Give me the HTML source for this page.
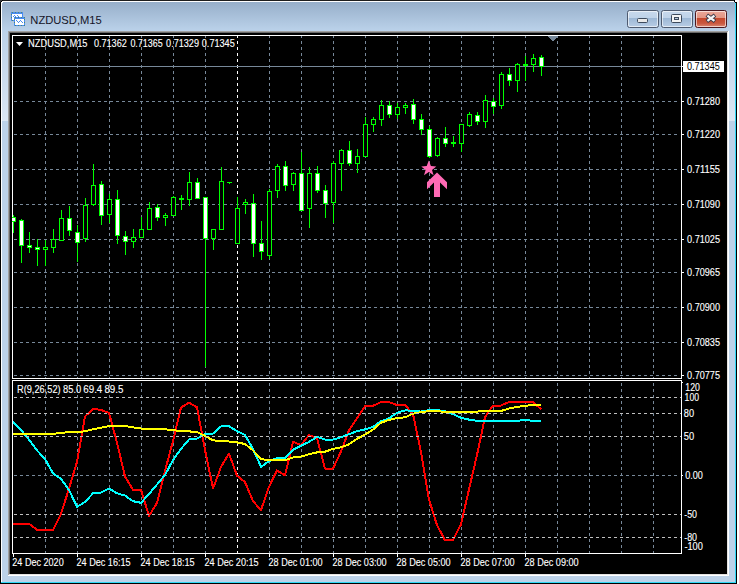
<!DOCTYPE html>
<html><head><meta charset="utf-8"><style>
html,body{margin:0;padding:0;background:#fff;width:739px;height:584px;overflow:hidden}
svg{display:block}
text{font-family:"Liberation Sans",sans-serif}
</style></head><body>
<svg width="739" height="584" viewBox="0 0 739 584">
<defs>
<linearGradient id="tg" x1="0" y1="0" x2="0" y2="1">
<stop offset="0" stop-color="#97afca"/><stop offset="1" stop-color="#bbd2ea"/>
</linearGradient>
<linearGradient id="bt" x1="0" y1="0" x2="0" y2="1">
<stop offset="0" stop-color="#c8d9ec"/><stop offset="0.43" stop-color="#bfd3e9"/><stop offset="0.44" stop-color="#9cb7d5"/><stop offset="1" stop-color="#b9cee6"/>
</linearGradient>
<linearGradient id="ct" x1="0" y1="0" x2="0" y2="1">
<stop offset="0" stop-color="#eba99b"/><stop offset="0.43" stop-color="#e39583"/><stop offset="0.44" stop-color="#c4472c"/><stop offset="0.75" stop-color="#c9573e"/><stop offset="1" stop-color="#de8f7d"/>
</linearGradient>
<linearGradient id="glare" x1="0" y1="0" x2="0" y2="1">
<stop offset="0" stop-color="#ffffff" stop-opacity="0"/><stop offset="1" stop-color="#ffffff" stop-opacity="0.45"/>
</linearGradient>
</defs>
<rect x="0" y="0" width="739" height="584" fill="#ffffff"/>
<g shape-rendering="crispEdges">
<rect x="0" y="0" width="737" height="584" fill="#000000"/>
<rect x="3" y="0" width="731" height="1" fill="#1e1e1e"/>
<rect x="1" y="1" width="735" height="582" fill="#ffffff"/>
<rect x="2" y="2" width="733" height="580" fill="#bcd2e9"/>
<rect x="735" y="2" width="1" height="581" fill="#30d8f6"/>
<rect x="1" y="582" width="735" height="1" fill="#30d8f6"/>
<rect x="2" y="2" width="733" height="29" fill="url(#tg)"/>
<rect x="2" y="31" width="6" height="90" fill="url(#glare)"/>
<rect x="729" y="31" width="6" height="90" fill="url(#glare)"/>
<rect x="8" y="31" width="721" height="545" fill="#ffffff"/>
<rect x="8" y="31" width="720" height="544" fill="#a0a0a0"/>
<rect x="9" y="32" width="719" height="543" fill="#e3e3e3"/>
<rect x="9" y="32" width="718" height="542" fill="#696969"/>
<rect x="10" y="33" width="717" height="541" fill="#000000"/>
</g>
<g shape-rendering="crispEdges"><rect x="0" y="0" width="2" height="1" fill="#3a3a3a"/><rect x="0" y="1" width="1" height="1" fill="#3a3a3a"/><rect x="1" y="1" width="1" height="1" fill="#000"/><rect x="2" y="2" width="1" height="1" fill="#ffffff"/>
<rect x="735" y="0" width="2" height="1" fill="#ffffff"/><rect x="736" y="1" width="1" height="1" fill="#ffffff"/><rect x="734" y="1" width="1" height="1" fill="#000"/><rect x="735" y="2" width="1" height="1" fill="#000"/></g>
<g shape-rendering="crispEdges">
<rect x="11" y="12" width="12" height="9" fill="#4a8df2"/>
<rect x="12" y="14" width="10" height="6" fill="#ffffff"/>
<rect x="14" y="17" width="11" height="9" fill="#4a8df2"/>
<rect x="15" y="19" width="9" height="6" fill="#ffffff"/>
<path d="M12 12.5h11M15 17.5h10M11.5 14v6M14.5 19v6M12 20.5h2M15 25.5h10M24.5 19v6" stroke="#4c8872" stroke-width="1" stroke-dasharray="1 2" fill="none"/>
<path d="M13 16h1M14 15h1M15 16h1M17 15h1M18 16h1M19 17h2" stroke="#4a8df2" stroke-width="1" fill="none" transform="translate(0,0.5)"/>
<path d="M16 20.5h1M17 21.5h1M18 22.5h1M19 21.5h1M20 20.5h1M21 21.5h1M22 22.5h1" stroke="#4a8df2" stroke-width="1" fill="none"/>
</g>
<text x="30.3" y="24" font-size="11.3" fill="#141428" textLength="71.5" lengthAdjust="spacingAndGlyphs">NZDUSD,M15</text>
<rect x="627.5" y="10.5" width="31" height="17" rx="2" fill="url(#bt)" stroke="#4e5b70"/>
<rect x="628.5" y="11.5" width="29" height="15" rx="1.5" fill="none" stroke="#ffffff" stroke-opacity="0.6"/>
<rect x="661.5" y="10.5" width="31" height="17" rx="2" fill="url(#bt)" stroke="#4e5b70"/>
<rect x="662.5" y="11.5" width="29" height="15" rx="1.5" fill="none" stroke="#ffffff" stroke-opacity="0.6"/>
<rect x="695.5" y="10.5" width="31" height="17" rx="2" fill="url(#ct)" stroke="#4a1820"/>
<rect x="696.5" y="11.5" width="29" height="15" rx="1.5" fill="none" stroke="#ffffff" stroke-opacity="0.6"/>
<rect x="637.5" y="18.5" width="10" height="4" rx="1" fill="#e9e9e9" stroke="#3d4a5c"/>
<rect x="671.5" y="14.5" width="10" height="8" rx="1" fill="#f4f4f4" stroke="#3d4a5c"/>
<rect x="674.5" y="17.5" width="4" height="2" fill="#b8c8da" stroke="#3d4a5c"/>
<path d="M706.8 15.2L715 21.4M715 15.2L706.8 21.4" stroke="#3a3a4a" stroke-width="4" stroke-linecap="butt"/>
<path d="M707.4 15.65L714.4 20.95M714.4 15.65L707.4 20.95" stroke="#f4f4f4" stroke-width="2.3" stroke-linecap="butt"/>
<g shape-rendering="crispEdges">
<path d="M45 36v2M45 41v3M45 47v3M45 53v3M45 59v3M45 65v3M45 71v3M45 77v3M45 83v3M45 89v3M45 95v3M45 101v3M45 107v3M45 113v3M45 119v3M45 125v3M45 131v3M45 137v3M45 143v3M45 149v3M45 155v3M45 161v3M45 167v3M45 173v3M45 179v3M45 185v3M45 191v3M45 197v3M45 203v3M45 209v3M45 215v3M45 221v3M45 227v3M45 233v3M45 239v3M45 245v3M45 251v3M45 257v3M45 263v3M45 269v3M45 275v3M45 281v3M45 287v3M45 293v3M45 299v3M45 305v3M45 311v3M45 317v3M45 323v3M45 329v3M45 335v3M45 341v3M45 347v3M45 353v3M45 359v3M45 365v3M45 371v3M45 377v1M45 383v3M45 389v3M45 395v3M45 401v3M45 407v3M45 413v3M45 419v3M45 425v3M45 431v3M45 437v3M45 443v3M45 449v3M45 455v3M45 461v3M45 467v3M45 473v3M45 479v3M45 485v3M45 491v3M45 497v3M45 503v3M45 509v3M45 515v3M45 521v3M45 527v3M45 533v3M45 539v3M45 545v3M45 551v2M77 36v2M77 41v3M77 47v3M77 53v3M77 59v3M77 65v3M77 71v3M77 77v3M77 83v3M77 89v3M77 95v3M77 101v3M77 107v3M77 113v3M77 119v3M77 125v3M77 131v3M77 137v3M77 143v3M77 149v3M77 155v3M77 161v3M77 167v3M77 173v3M77 179v3M77 185v3M77 191v3M77 197v3M77 203v3M77 209v3M77 215v3M77 221v3M77 227v3M77 233v3M77 239v3M77 245v3M77 251v3M77 257v3M77 263v3M77 269v3M77 275v3M77 281v3M77 287v3M77 293v3M77 299v3M77 305v3M77 311v3M77 317v3M77 323v3M77 329v3M77 335v3M77 341v3M77 347v3M77 353v3M77 359v3M77 365v3M77 371v3M77 377v1M77 383v3M77 389v3M77 395v3M77 401v3M77 407v3M77 413v3M77 419v3M77 425v3M77 431v3M77 437v3M77 443v3M77 449v3M77 455v3M77 461v3M77 467v3M77 473v3M77 479v3M77 485v3M77 491v3M77 497v3M77 503v3M77 509v3M77 515v3M77 521v3M77 527v3M77 533v3M77 539v3M77 545v3M77 551v2M109 36v2M109 41v3M109 47v3M109 53v3M109 59v3M109 65v3M109 71v3M109 77v3M109 83v3M109 89v3M109 95v3M109 101v3M109 107v3M109 113v3M109 119v3M109 125v3M109 131v3M109 137v3M109 143v3M109 149v3M109 155v3M109 161v3M109 167v3M109 173v3M109 179v3M109 185v3M109 191v3M109 197v3M109 203v3M109 209v3M109 215v3M109 221v3M109 227v3M109 233v3M109 239v3M109 245v3M109 251v3M109 257v3M109 263v3M109 269v3M109 275v3M109 281v3M109 287v3M109 293v3M109 299v3M109 305v3M109 311v3M109 317v3M109 323v3M109 329v3M109 335v3M109 341v3M109 347v3M109 353v3M109 359v3M109 365v3M109 371v3M109 377v1M109 383v3M109 389v3M109 395v3M109 401v3M109 407v3M109 413v3M109 419v3M109 425v3M109 431v3M109 437v3M109 443v3M109 449v3M109 455v3M109 461v3M109 467v3M109 473v3M109 479v3M109 485v3M109 491v3M109 497v3M109 503v3M109 509v3M109 515v3M109 521v3M109 527v3M109 533v3M109 539v3M109 545v3M109 551v2M141 36v2M141 41v3M141 47v3M141 53v3M141 59v3M141 65v3M141 71v3M141 77v3M141 83v3M141 89v3M141 95v3M141 101v3M141 107v3M141 113v3M141 119v3M141 125v3M141 131v3M141 137v3M141 143v3M141 149v3M141 155v3M141 161v3M141 167v3M141 173v3M141 179v3M141 185v3M141 191v3M141 197v3M141 203v3M141 209v3M141 215v3M141 221v3M141 227v3M141 233v3M141 239v3M141 245v3M141 251v3M141 257v3M141 263v3M141 269v3M141 275v3M141 281v3M141 287v3M141 293v3M141 299v3M141 305v3M141 311v3M141 317v3M141 323v3M141 329v3M141 335v3M141 341v3M141 347v3M141 353v3M141 359v3M141 365v3M141 371v3M141 377v1M141 383v3M141 389v3M141 395v3M141 401v3M141 407v3M141 413v3M141 419v3M141 425v3M141 431v3M141 437v3M141 443v3M141 449v3M141 455v3M141 461v3M141 467v3M141 473v3M141 479v3M141 485v3M141 491v3M141 497v3M141 503v3M141 509v3M141 515v3M141 521v3M141 527v3M141 533v3M141 539v3M141 545v3M141 551v2M173 36v2M173 41v3M173 47v3M173 53v3M173 59v3M173 65v3M173 71v3M173 77v3M173 83v3M173 89v3M173 95v3M173 101v3M173 107v3M173 113v3M173 119v3M173 125v3M173 131v3M173 137v3M173 143v3M173 149v3M173 155v3M173 161v3M173 167v3M173 173v3M173 179v3M173 185v3M173 191v3M173 197v3M173 203v3M173 209v3M173 215v3M173 221v3M173 227v3M173 233v3M173 239v3M173 245v3M173 251v3M173 257v3M173 263v3M173 269v3M173 275v3M173 281v3M173 287v3M173 293v3M173 299v3M173 305v3M173 311v3M173 317v3M173 323v3M173 329v3M173 335v3M173 341v3M173 347v3M173 353v3M173 359v3M173 365v3M173 371v3M173 377v1M173 383v3M173 389v3M173 395v3M173 401v3M173 407v3M173 413v3M173 419v3M173 425v3M173 431v3M173 437v3M173 443v3M173 449v3M173 455v3M173 461v3M173 467v3M173 473v3M173 479v3M173 485v3M173 491v3M173 497v3M173 503v3M173 509v3M173 515v3M173 521v3M173 527v3M173 533v3M173 539v3M173 545v3M173 551v2M205 36v2M205 41v3M205 47v3M205 53v3M205 59v3M205 65v3M205 71v3M205 77v3M205 83v3M205 89v3M205 95v3M205 101v3M205 107v3M205 113v3M205 119v3M205 125v3M205 131v3M205 137v3M205 143v3M205 149v3M205 155v3M205 161v3M205 167v3M205 173v3M205 179v3M205 185v3M205 191v3M205 197v3M205 203v3M205 209v3M205 215v3M205 221v3M205 227v3M205 233v3M205 239v3M205 245v3M205 251v3M205 257v3M205 263v3M205 269v3M205 275v3M205 281v3M205 287v3M205 293v3M205 299v3M205 305v3M205 311v3M205 317v3M205 323v3M205 329v3M205 335v3M205 341v3M205 347v3M205 353v3M205 359v3M205 365v3M205 371v3M205 377v1M205 383v3M205 389v3M205 395v3M205 401v3M205 407v3M205 413v3M205 419v3M205 425v3M205 431v3M205 437v3M205 443v3M205 449v3M205 455v3M205 461v3M205 467v3M205 473v3M205 479v3M205 485v3M205 491v3M205 497v3M205 503v3M205 509v3M205 515v3M205 521v3M205 527v3M205 533v3M205 539v3M205 545v3M205 551v2M269 36v2M269 41v3M269 47v3M269 53v3M269 59v3M269 65v3M269 71v3M269 77v3M269 83v3M269 89v3M269 95v3M269 101v3M269 107v3M269 113v3M269 119v3M269 125v3M269 131v3M269 137v3M269 143v3M269 149v3M269 155v3M269 161v3M269 167v3M269 173v3M269 179v3M269 185v3M269 191v3M269 197v3M269 203v3M269 209v3M269 215v3M269 221v3M269 227v3M269 233v3M269 239v3M269 245v3M269 251v3M269 257v3M269 263v3M269 269v3M269 275v3M269 281v3M269 287v3M269 293v3M269 299v3M269 305v3M269 311v3M269 317v3M269 323v3M269 329v3M269 335v3M269 341v3M269 347v3M269 353v3M269 359v3M269 365v3M269 371v3M269 377v1M269 383v3M269 389v3M269 395v3M269 401v3M269 407v3M269 413v3M269 419v3M269 425v3M269 431v3M269 437v3M269 443v3M269 449v3M269 455v3M269 461v3M269 467v3M269 473v3M269 479v3M269 485v3M269 491v3M269 497v3M269 503v3M269 509v3M269 515v3M269 521v3M269 527v3M269 533v3M269 539v3M269 545v3M269 551v2M301 36v2M301 41v3M301 47v3M301 53v3M301 59v3M301 65v3M301 71v3M301 77v3M301 83v3M301 89v3M301 95v3M301 101v3M301 107v3M301 113v3M301 119v3M301 125v3M301 131v3M301 137v3M301 143v3M301 149v3M301 155v3M301 161v3M301 167v3M301 173v3M301 179v3M301 185v3M301 191v3M301 197v3M301 203v3M301 209v3M301 215v3M301 221v3M301 227v3M301 233v3M301 239v3M301 245v3M301 251v3M301 257v3M301 263v3M301 269v3M301 275v3M301 281v3M301 287v3M301 293v3M301 299v3M301 305v3M301 311v3M301 317v3M301 323v3M301 329v3M301 335v3M301 341v3M301 347v3M301 353v3M301 359v3M301 365v3M301 371v3M301 377v1M301 383v3M301 389v3M301 395v3M301 401v3M301 407v3M301 413v3M301 419v3M301 425v3M301 431v3M301 437v3M301 443v3M301 449v3M301 455v3M301 461v3M301 467v3M301 473v3M301 479v3M301 485v3M301 491v3M301 497v3M301 503v3M301 509v3M301 515v3M301 521v3M301 527v3M301 533v3M301 539v3M301 545v3M301 551v2M333 36v2M333 41v3M333 47v3M333 53v3M333 59v3M333 65v3M333 71v3M333 77v3M333 83v3M333 89v3M333 95v3M333 101v3M333 107v3M333 113v3M333 119v3M333 125v3M333 131v3M333 137v3M333 143v3M333 149v3M333 155v3M333 161v3M333 167v3M333 173v3M333 179v3M333 185v3M333 191v3M333 197v3M333 203v3M333 209v3M333 215v3M333 221v3M333 227v3M333 233v3M333 239v3M333 245v3M333 251v3M333 257v3M333 263v3M333 269v3M333 275v3M333 281v3M333 287v3M333 293v3M333 299v3M333 305v3M333 311v3M333 317v3M333 323v3M333 329v3M333 335v3M333 341v3M333 347v3M333 353v3M333 359v3M333 365v3M333 371v3M333 377v1M333 383v3M333 389v3M333 395v3M333 401v3M333 407v3M333 413v3M333 419v3M333 425v3M333 431v3M333 437v3M333 443v3M333 449v3M333 455v3M333 461v3M333 467v3M333 473v3M333 479v3M333 485v3M333 491v3M333 497v3M333 503v3M333 509v3M333 515v3M333 521v3M333 527v3M333 533v3M333 539v3M333 545v3M333 551v2M365 36v2M365 41v3M365 47v3M365 53v3M365 59v3M365 65v3M365 71v3M365 77v3M365 83v3M365 89v3M365 95v3M365 101v3M365 107v3M365 113v3M365 119v3M365 125v3M365 131v3M365 137v3M365 143v3M365 149v3M365 155v3M365 161v3M365 167v3M365 173v3M365 179v3M365 185v3M365 191v3M365 197v3M365 203v3M365 209v3M365 215v3M365 221v3M365 227v3M365 233v3M365 239v3M365 245v3M365 251v3M365 257v3M365 263v3M365 269v3M365 275v3M365 281v3M365 287v3M365 293v3M365 299v3M365 305v3M365 311v3M365 317v3M365 323v3M365 329v3M365 335v3M365 341v3M365 347v3M365 353v3M365 359v3M365 365v3M365 371v3M365 377v1M365 383v3M365 389v3M365 395v3M365 401v3M365 407v3M365 413v3M365 419v3M365 425v3M365 431v3M365 437v3M365 443v3M365 449v3M365 455v3M365 461v3M365 467v3M365 473v3M365 479v3M365 485v3M365 491v3M365 497v3M365 503v3M365 509v3M365 515v3M365 521v3M365 527v3M365 533v3M365 539v3M365 545v3M365 551v2M397 36v2M397 41v3M397 47v3M397 53v3M397 59v3M397 65v3M397 71v3M397 77v3M397 83v3M397 89v3M397 95v3M397 101v3M397 107v3M397 113v3M397 119v3M397 125v3M397 131v3M397 137v3M397 143v3M397 149v3M397 155v3M397 161v3M397 167v3M397 173v3M397 179v3M397 185v3M397 191v3M397 197v3M397 203v3M397 209v3M397 215v3M397 221v3M397 227v3M397 233v3M397 239v3M397 245v3M397 251v3M397 257v3M397 263v3M397 269v3M397 275v3M397 281v3M397 287v3M397 293v3M397 299v3M397 305v3M397 311v3M397 317v3M397 323v3M397 329v3M397 335v3M397 341v3M397 347v3M397 353v3M397 359v3M397 365v3M397 371v3M397 377v1M397 383v3M397 389v3M397 395v3M397 401v3M397 407v3M397 413v3M397 419v3M397 425v3M397 431v3M397 437v3M397 443v3M397 449v3M397 455v3M397 461v3M397 467v3M397 473v3M397 479v3M397 485v3M397 491v3M397 497v3M397 503v3M397 509v3M397 515v3M397 521v3M397 527v3M397 533v3M397 539v3M397 545v3M397 551v2M429 36v2M429 41v3M429 47v3M429 53v3M429 59v3M429 65v3M429 71v3M429 77v3M429 83v3M429 89v3M429 95v3M429 101v3M429 107v3M429 113v3M429 119v3M429 125v3M429 131v3M429 137v3M429 143v3M429 149v3M429 155v3M429 161v3M429 167v3M429 173v3M429 179v3M429 185v3M429 191v3M429 197v3M429 203v3M429 209v3M429 215v3M429 221v3M429 227v3M429 233v3M429 239v3M429 245v3M429 251v3M429 257v3M429 263v3M429 269v3M429 275v3M429 281v3M429 287v3M429 293v3M429 299v3M429 305v3M429 311v3M429 317v3M429 323v3M429 329v3M429 335v3M429 341v3M429 347v3M429 353v3M429 359v3M429 365v3M429 371v3M429 377v1M429 383v3M429 389v3M429 395v3M429 401v3M429 407v3M429 413v3M429 419v3M429 425v3M429 431v3M429 437v3M429 443v3M429 449v3M429 455v3M429 461v3M429 467v3M429 473v3M429 479v3M429 485v3M429 491v3M429 497v3M429 503v3M429 509v3M429 515v3M429 521v3M429 527v3M429 533v3M429 539v3M429 545v3M429 551v2M461 36v2M461 41v3M461 47v3M461 53v3M461 59v3M461 65v3M461 71v3M461 77v3M461 83v3M461 89v3M461 95v3M461 101v3M461 107v3M461 113v3M461 119v3M461 125v3M461 131v3M461 137v3M461 143v3M461 149v3M461 155v3M461 161v3M461 167v3M461 173v3M461 179v3M461 185v3M461 191v3M461 197v3M461 203v3M461 209v3M461 215v3M461 221v3M461 227v3M461 233v3M461 239v3M461 245v3M461 251v3M461 257v3M461 263v3M461 269v3M461 275v3M461 281v3M461 287v3M461 293v3M461 299v3M461 305v3M461 311v3M461 317v3M461 323v3M461 329v3M461 335v3M461 341v3M461 347v3M461 353v3M461 359v3M461 365v3M461 371v3M461 377v1M461 383v3M461 389v3M461 395v3M461 401v3M461 407v3M461 413v3M461 419v3M461 425v3M461 431v3M461 437v3M461 443v3M461 449v3M461 455v3M461 461v3M461 467v3M461 473v3M461 479v3M461 485v3M461 491v3M461 497v3M461 503v3M461 509v3M461 515v3M461 521v3M461 527v3M461 533v3M461 539v3M461 545v3M461 551v2M493 36v2M493 41v3M493 47v3M493 53v3M493 59v3M493 65v3M493 71v3M493 77v3M493 83v3M493 89v3M493 95v3M493 101v3M493 107v3M493 113v3M493 119v3M493 125v3M493 131v3M493 137v3M493 143v3M493 149v3M493 155v3M493 161v3M493 167v3M493 173v3M493 179v3M493 185v3M493 191v3M493 197v3M493 203v3M493 209v3M493 215v3M493 221v3M493 227v3M493 233v3M493 239v3M493 245v3M493 251v3M493 257v3M493 263v3M493 269v3M493 275v3M493 281v3M493 287v3M493 293v3M493 299v3M493 305v3M493 311v3M493 317v3M493 323v3M493 329v3M493 335v3M493 341v3M493 347v3M493 353v3M493 359v3M493 365v3M493 371v3M493 377v1M493 383v3M493 389v3M493 395v3M493 401v3M493 407v3M493 413v3M493 419v3M493 425v3M493 431v3M493 437v3M493 443v3M493 449v3M493 455v3M493 461v3M493 467v3M493 473v3M493 479v3M493 485v3M493 491v3M493 497v3M493 503v3M493 509v3M493 515v3M493 521v3M493 527v3M493 533v3M493 539v3M493 545v3M493 551v2M525 36v2M525 41v3M525 47v3M525 53v3M525 59v3M525 65v3M525 71v3M525 77v3M525 83v3M525 89v3M525 95v3M525 101v3M525 107v3M525 113v3M525 119v3M525 125v3M525 131v3M525 137v3M525 143v3M525 149v3M525 155v3M525 161v3M525 167v3M525 173v3M525 179v3M525 185v3M525 191v3M525 197v3M525 203v3M525 209v3M525 215v3M525 221v3M525 227v3M525 233v3M525 239v3M525 245v3M525 251v3M525 257v3M525 263v3M525 269v3M525 275v3M525 281v3M525 287v3M525 293v3M525 299v3M525 305v3M525 311v3M525 317v3M525 323v3M525 329v3M525 335v3M525 341v3M525 347v3M525 353v3M525 359v3M525 365v3M525 371v3M525 377v1M525 383v3M525 389v3M525 395v3M525 401v3M525 407v3M525 413v3M525 419v3M525 425v3M525 431v3M525 437v3M525 443v3M525 449v3M525 455v3M525 461v3M525 467v3M525 473v3M525 479v3M525 485v3M525 491v3M525 497v3M525 503v3M525 509v3M525 515v3M525 521v3M525 527v3M525 533v3M525 539v3M525 545v3M525 551v2M557 36v2M557 41v3M557 47v3M557 53v3M557 59v3M557 65v3M557 71v3M557 77v3M557 83v3M557 89v3M557 95v3M557 101v3M557 107v3M557 113v3M557 119v3M557 125v3M557 131v3M557 137v3M557 143v3M557 149v3M557 155v3M557 161v3M557 167v3M557 173v3M557 179v3M557 185v3M557 191v3M557 197v3M557 203v3M557 209v3M557 215v3M557 221v3M557 227v3M557 233v3M557 239v3M557 245v3M557 251v3M557 257v3M557 263v3M557 269v3M557 275v3M557 281v3M557 287v3M557 293v3M557 299v3M557 305v3M557 311v3M557 317v3M557 323v3M557 329v3M557 335v3M557 341v3M557 347v3M557 353v3M557 359v3M557 365v3M557 371v3M557 377v1M557 383v3M557 389v3M557 395v3M557 401v3M557 407v3M557 413v3M557 419v3M557 425v3M557 431v3M557 437v3M557 443v3M557 449v3M557 455v3M557 461v3M557 467v3M557 473v3M557 479v3M557 485v3M557 491v3M557 497v3M557 503v3M557 509v3M557 515v3M557 521v3M557 527v3M557 533v3M557 539v3M557 545v3M557 551v2M589 36v2M589 41v3M589 47v3M589 53v3M589 59v3M589 65v3M589 71v3M589 77v3M589 83v3M589 89v3M589 95v3M589 101v3M589 107v3M589 113v3M589 119v3M589 125v3M589 131v3M589 137v3M589 143v3M589 149v3M589 155v3M589 161v3M589 167v3M589 173v3M589 179v3M589 185v3M589 191v3M589 197v3M589 203v3M589 209v3M589 215v3M589 221v3M589 227v3M589 233v3M589 239v3M589 245v3M589 251v3M589 257v3M589 263v3M589 269v3M589 275v3M589 281v3M589 287v3M589 293v3M589 299v3M589 305v3M589 311v3M589 317v3M589 323v3M589 329v3M589 335v3M589 341v3M589 347v3M589 353v3M589 359v3M589 365v3M589 371v3M589 377v1M589 383v3M589 389v3M589 395v3M589 401v3M589 407v3M589 413v3M589 419v3M589 425v3M589 431v3M589 437v3M589 443v3M589 449v3M589 455v3M589 461v3M589 467v3M589 473v3M589 479v3M589 485v3M589 491v3M589 497v3M589 503v3M589 509v3M589 515v3M589 521v3M589 527v3M589 533v3M589 539v3M589 545v3M589 551v2M621 36v2M621 41v3M621 47v3M621 53v3M621 59v3M621 65v3M621 71v3M621 77v3M621 83v3M621 89v3M621 95v3M621 101v3M621 107v3M621 113v3M621 119v3M621 125v3M621 131v3M621 137v3M621 143v3M621 149v3M621 155v3M621 161v3M621 167v3M621 173v3M621 179v3M621 185v3M621 191v3M621 197v3M621 203v3M621 209v3M621 215v3M621 221v3M621 227v3M621 233v3M621 239v3M621 245v3M621 251v3M621 257v3M621 263v3M621 269v3M621 275v3M621 281v3M621 287v3M621 293v3M621 299v3M621 305v3M621 311v3M621 317v3M621 323v3M621 329v3M621 335v3M621 341v3M621 347v3M621 353v3M621 359v3M621 365v3M621 371v3M621 377v1M621 383v3M621 389v3M621 395v3M621 401v3M621 407v3M621 413v3M621 419v3M621 425v3M621 431v3M621 437v3M621 443v3M621 449v3M621 455v3M621 461v3M621 467v3M621 473v3M621 479v3M621 485v3M621 491v3M621 497v3M621 503v3M621 509v3M621 515v3M621 521v3M621 527v3M621 533v3M621 539v3M621 545v3M621 551v2M653 36v2M653 41v3M653 47v3M653 53v3M653 59v3M653 65v3M653 71v3M653 77v3M653 83v3M653 89v3M653 95v3M653 101v3M653 107v3M653 113v3M653 119v3M653 125v3M653 131v3M653 137v3M653 143v3M653 149v3M653 155v3M653 161v3M653 167v3M653 173v3M653 179v3M653 185v3M653 191v3M653 197v3M653 203v3M653 209v3M653 215v3M653 221v3M653 227v3M653 233v3M653 239v3M653 245v3M653 251v3M653 257v3M653 263v3M653 269v3M653 275v3M653 281v3M653 287v3M653 293v3M653 299v3M653 305v3M653 311v3M653 317v3M653 323v3M653 329v3M653 335v3M653 341v3M653 347v3M653 353v3M653 359v3M653 365v3M653 371v3M653 377v1M653 383v3M653 389v3M653 395v3M653 401v3M653 407v3M653 413v3M653 419v3M653 425v3M653 431v3M653 437v3M653 443v3M653 449v3M653 455v3M653 461v3M653 467v3M653 473v3M653 479v3M653 485v3M653 491v3M653 497v3M653 503v3M653 509v3M653 515v3M653 521v3M653 527v3M653 533v3M653 539v3M653 545v3M653 551v2" stroke="#778899" stroke-width="1" fill="none" transform="translate(0.5,0)"/>
<path d="M237 36v2M237 41v3M237 47v3M237 53v3M237 59v3M237 65v3M237 71v3M237 77v3M237 83v3M237 89v3M237 95v3M237 101v3M237 107v3M237 113v3M237 119v3M237 125v3M237 131v3M237 137v3M237 143v3M237 149v3M237 155v3M237 161v3M237 167v3M237 173v3M237 179v3M237 185v3M237 191v3M237 197v3M237 203v3M237 209v3M237 215v3M237 221v3M237 227v3M237 233v3M237 239v3M237 245v3M237 251v3M237 257v3M237 263v3M237 269v3M237 275v3M237 281v3M237 287v3M237 293v3M237 299v3M237 305v3M237 311v3M237 317v3M237 323v3M237 329v3M237 335v3M237 341v3M237 347v3M237 353v3M237 359v3M237 365v3M237 371v3M237 377v1M237 383v3M237 389v3M237 395v3M237 401v3M237 407v3M237 413v3M237 419v3M237 425v3M237 431v3M237 437v3M237 443v3M237 449v3M237 455v3M237 461v3M237 467v3M237 473v3M237 479v3M237 485v3M237 491v3M237 497v3M237 503v3M237 509v3M237 515v3M237 521v3M237 527v3M237 533v3M237 539v3M237 545v3M237 551v2" stroke="#ffffff" stroke-width="1" fill="none" transform="translate(0.5,0)"/>
<path d="M15 101h2M14 101h3M20 101h3M26 101h3M32 101h3M38 101h3M44 101h3M50 101h3M56 101h3M62 101h3M68 101h3M74 101h3M80 101h3M86 101h3M92 101h3M98 101h3M104 101h3M110 101h3M116 101h3M122 101h3M128 101h3M134 101h3M140 101h3M146 101h3M152 101h3M158 101h3M164 101h3M170 101h3M176 101h3M182 101h3M188 101h3M194 101h3M200 101h3M206 101h3M212 101h3M218 101h3M224 101h3M230 101h3M236 101h3M242 101h3M248 101h3M254 101h3M260 101h3M266 101h3M272 101h3M278 101h3M284 101h3M290 101h3M296 101h3M302 101h3M308 101h3M314 101h3M320 101h3M326 101h3M332 101h3M338 101h3M344 101h3M350 101h3M356 101h3M362 101h3M368 101h3M374 101h3M380 101h3M386 101h3M392 101h3M398 101h3M404 101h3M410 101h3M416 101h3M422 101h3M428 101h3M434 101h3M440 101h3M446 101h3M452 101h3M458 101h3M464 101h3M470 101h3M476 101h3M482 101h3M488 101h3M494 101h3M500 101h3M506 101h3M512 101h3M518 101h3M524 101h3M530 101h3M536 101h3M542 101h3M548 101h3M554 101h3M560 101h3M566 101h3M572 101h3M578 101h3M584 101h3M590 101h3M596 101h3M602 101h3M608 101h3M614 101h3M620 101h3M626 101h3M632 101h3M638 101h3M644 101h3M650 101h3M656 101h3M662 101h3M668 101h3M674 101h3M15 134h2M14 134h3M20 134h3M26 134h3M32 134h3M38 134h3M44 134h3M50 134h3M56 134h3M62 134h3M68 134h3M74 134h3M80 134h3M86 134h3M92 134h3M98 134h3M104 134h3M110 134h3M116 134h3M122 134h3M128 134h3M134 134h3M140 134h3M146 134h3M152 134h3M158 134h3M164 134h3M170 134h3M176 134h3M182 134h3M188 134h3M194 134h3M200 134h3M206 134h3M212 134h3M218 134h3M224 134h3M230 134h3M236 134h3M242 134h3M248 134h3M254 134h3M260 134h3M266 134h3M272 134h3M278 134h3M284 134h3M290 134h3M296 134h3M302 134h3M308 134h3M314 134h3M320 134h3M326 134h3M332 134h3M338 134h3M344 134h3M350 134h3M356 134h3M362 134h3M368 134h3M374 134h3M380 134h3M386 134h3M392 134h3M398 134h3M404 134h3M410 134h3M416 134h3M422 134h3M428 134h3M434 134h3M440 134h3M446 134h3M452 134h3M458 134h3M464 134h3M470 134h3M476 134h3M482 134h3M488 134h3M494 134h3M500 134h3M506 134h3M512 134h3M518 134h3M524 134h3M530 134h3M536 134h3M542 134h3M548 134h3M554 134h3M560 134h3M566 134h3M572 134h3M578 134h3M584 134h3M590 134h3M596 134h3M602 134h3M608 134h3M614 134h3M620 134h3M626 134h3M632 134h3M638 134h3M644 134h3M650 134h3M656 134h3M662 134h3M668 134h3M674 134h3M15 169h2M14 169h3M20 169h3M26 169h3M32 169h3M38 169h3M44 169h3M50 169h3M56 169h3M62 169h3M68 169h3M74 169h3M80 169h3M86 169h3M92 169h3M98 169h3M104 169h3M110 169h3M116 169h3M122 169h3M128 169h3M134 169h3M140 169h3M146 169h3M152 169h3M158 169h3M164 169h3M170 169h3M176 169h3M182 169h3M188 169h3M194 169h3M200 169h3M206 169h3M212 169h3M218 169h3M224 169h3M230 169h3M236 169h3M242 169h3M248 169h3M254 169h3M260 169h3M266 169h3M272 169h3M278 169h3M284 169h3M290 169h3M296 169h3M302 169h3M308 169h3M314 169h3M320 169h3M326 169h3M332 169h3M338 169h3M344 169h3M350 169h3M356 169h3M362 169h3M368 169h3M374 169h3M380 169h3M386 169h3M392 169h3M398 169h3M404 169h3M410 169h3M416 169h3M422 169h3M428 169h3M434 169h3M440 169h3M446 169h3M452 169h3M458 169h3M464 169h3M470 169h3M476 169h3M482 169h3M488 169h3M494 169h3M500 169h3M506 169h3M512 169h3M518 169h3M524 169h3M530 169h3M536 169h3M542 169h3M548 169h3M554 169h3M560 169h3M566 169h3M572 169h3M578 169h3M584 169h3M590 169h3M596 169h3M602 169h3M608 169h3M614 169h3M620 169h3M626 169h3M632 169h3M638 169h3M644 169h3M650 169h3M656 169h3M662 169h3M668 169h3M674 169h3M15 204h2M14 204h3M20 204h3M26 204h3M32 204h3M38 204h3M44 204h3M50 204h3M56 204h3M62 204h3M68 204h3M74 204h3M80 204h3M86 204h3M92 204h3M98 204h3M104 204h3M110 204h3M116 204h3M122 204h3M128 204h3M134 204h3M140 204h3M146 204h3M152 204h3M158 204h3M164 204h3M170 204h3M176 204h3M182 204h3M188 204h3M194 204h3M200 204h3M206 204h3M212 204h3M218 204h3M224 204h3M230 204h3M236 204h3M242 204h3M248 204h3M254 204h3M260 204h3M266 204h3M272 204h3M278 204h3M284 204h3M290 204h3M296 204h3M302 204h3M308 204h3M314 204h3M320 204h3M326 204h3M332 204h3M338 204h3M344 204h3M350 204h3M356 204h3M362 204h3M368 204h3M374 204h3M380 204h3M386 204h3M392 204h3M398 204h3M404 204h3M410 204h3M416 204h3M422 204h3M428 204h3M434 204h3M440 204h3M446 204h3M452 204h3M458 204h3M464 204h3M470 204h3M476 204h3M482 204h3M488 204h3M494 204h3M500 204h3M506 204h3M512 204h3M518 204h3M524 204h3M530 204h3M536 204h3M542 204h3M548 204h3M554 204h3M560 204h3M566 204h3M572 204h3M578 204h3M584 204h3M590 204h3M596 204h3M602 204h3M608 204h3M614 204h3M620 204h3M626 204h3M632 204h3M638 204h3M644 204h3M650 204h3M656 204h3M662 204h3M668 204h3M674 204h3M15 239h2M14 239h3M20 239h3M26 239h3M32 239h3M38 239h3M44 239h3M50 239h3M56 239h3M62 239h3M68 239h3M74 239h3M80 239h3M86 239h3M92 239h3M98 239h3M104 239h3M110 239h3M116 239h3M122 239h3M128 239h3M134 239h3M140 239h3M146 239h3M152 239h3M158 239h3M164 239h3M170 239h3M176 239h3M182 239h3M188 239h3M194 239h3M200 239h3M206 239h3M212 239h3M218 239h3M224 239h3M230 239h3M236 239h3M242 239h3M248 239h3M254 239h3M260 239h3M266 239h3M272 239h3M278 239h3M284 239h3M290 239h3M296 239h3M302 239h3M308 239h3M314 239h3M320 239h3M326 239h3M332 239h3M338 239h3M344 239h3M350 239h3M356 239h3M362 239h3M368 239h3M374 239h3M380 239h3M386 239h3M392 239h3M398 239h3M404 239h3M410 239h3M416 239h3M422 239h3M428 239h3M434 239h3M440 239h3M446 239h3M452 239h3M458 239h3M464 239h3M470 239h3M476 239h3M482 239h3M488 239h3M494 239h3M500 239h3M506 239h3M512 239h3M518 239h3M524 239h3M530 239h3M536 239h3M542 239h3M548 239h3M554 239h3M560 239h3M566 239h3M572 239h3M578 239h3M584 239h3M590 239h3M596 239h3M602 239h3M608 239h3M614 239h3M620 239h3M626 239h3M632 239h3M638 239h3M644 239h3M650 239h3M656 239h3M662 239h3M668 239h3M674 239h3M15 272h2M14 272h3M20 272h3M26 272h3M32 272h3M38 272h3M44 272h3M50 272h3M56 272h3M62 272h3M68 272h3M74 272h3M80 272h3M86 272h3M92 272h3M98 272h3M104 272h3M110 272h3M116 272h3M122 272h3M128 272h3M134 272h3M140 272h3M146 272h3M152 272h3M158 272h3M164 272h3M170 272h3M176 272h3M182 272h3M188 272h3M194 272h3M200 272h3M206 272h3M212 272h3M218 272h3M224 272h3M230 272h3M236 272h3M242 272h3M248 272h3M254 272h3M260 272h3M266 272h3M272 272h3M278 272h3M284 272h3M290 272h3M296 272h3M302 272h3M308 272h3M314 272h3M320 272h3M326 272h3M332 272h3M338 272h3M344 272h3M350 272h3M356 272h3M362 272h3M368 272h3M374 272h3M380 272h3M386 272h3M392 272h3M398 272h3M404 272h3M410 272h3M416 272h3M422 272h3M428 272h3M434 272h3M440 272h3M446 272h3M452 272h3M458 272h3M464 272h3M470 272h3M476 272h3M482 272h3M488 272h3M494 272h3M500 272h3M506 272h3M512 272h3M518 272h3M524 272h3M530 272h3M536 272h3M542 272h3M548 272h3M554 272h3M560 272h3M566 272h3M572 272h3M578 272h3M584 272h3M590 272h3M596 272h3M602 272h3M608 272h3M614 272h3M620 272h3M626 272h3M632 272h3M638 272h3M644 272h3M650 272h3M656 272h3M662 272h3M668 272h3M674 272h3M15 307h2M14 307h3M20 307h3M26 307h3M32 307h3M38 307h3M44 307h3M50 307h3M56 307h3M62 307h3M68 307h3M74 307h3M80 307h3M86 307h3M92 307h3M98 307h3M104 307h3M110 307h3M116 307h3M122 307h3M128 307h3M134 307h3M140 307h3M146 307h3M152 307h3M158 307h3M164 307h3M170 307h3M176 307h3M182 307h3M188 307h3M194 307h3M200 307h3M206 307h3M212 307h3M218 307h3M224 307h3M230 307h3M236 307h3M242 307h3M248 307h3M254 307h3M260 307h3M266 307h3M272 307h3M278 307h3M284 307h3M290 307h3M296 307h3M302 307h3M308 307h3M314 307h3M320 307h3M326 307h3M332 307h3M338 307h3M344 307h3M350 307h3M356 307h3M362 307h3M368 307h3M374 307h3M380 307h3M386 307h3M392 307h3M398 307h3M404 307h3M410 307h3M416 307h3M422 307h3M428 307h3M434 307h3M440 307h3M446 307h3M452 307h3M458 307h3M464 307h3M470 307h3M476 307h3M482 307h3M488 307h3M494 307h3M500 307h3M506 307h3M512 307h3M518 307h3M524 307h3M530 307h3M536 307h3M542 307h3M548 307h3M554 307h3M560 307h3M566 307h3M572 307h3M578 307h3M584 307h3M590 307h3M596 307h3M602 307h3M608 307h3M614 307h3M620 307h3M626 307h3M632 307h3M638 307h3M644 307h3M650 307h3M656 307h3M662 307h3M668 307h3M674 307h3M15 342h2M14 342h3M20 342h3M26 342h3M32 342h3M38 342h3M44 342h3M50 342h3M56 342h3M62 342h3M68 342h3M74 342h3M80 342h3M86 342h3M92 342h3M98 342h3M104 342h3M110 342h3M116 342h3M122 342h3M128 342h3M134 342h3M140 342h3M146 342h3M152 342h3M158 342h3M164 342h3M170 342h3M176 342h3M182 342h3M188 342h3M194 342h3M200 342h3M206 342h3M212 342h3M218 342h3M224 342h3M230 342h3M236 342h3M242 342h3M248 342h3M254 342h3M260 342h3M266 342h3M272 342h3M278 342h3M284 342h3M290 342h3M296 342h3M302 342h3M308 342h3M314 342h3M320 342h3M326 342h3M332 342h3M338 342h3M344 342h3M350 342h3M356 342h3M362 342h3M368 342h3M374 342h3M380 342h3M386 342h3M392 342h3M398 342h3M404 342h3M410 342h3M416 342h3M422 342h3M428 342h3M434 342h3M440 342h3M446 342h3M452 342h3M458 342h3M464 342h3M470 342h3M476 342h3M482 342h3M488 342h3M494 342h3M500 342h3M506 342h3M512 342h3M518 342h3M524 342h3M530 342h3M536 342h3M542 342h3M548 342h3M554 342h3M560 342h3M566 342h3M572 342h3M578 342h3M584 342h3M590 342h3M596 342h3M602 342h3M608 342h3M614 342h3M620 342h3M626 342h3M632 342h3M638 342h3M644 342h3M650 342h3M656 342h3M662 342h3M668 342h3M674 342h3M15 375h2M14 375h3M20 375h3M26 375h3M32 375h3M38 375h3M44 375h3M50 375h3M56 375h3M62 375h3M68 375h3M74 375h3M80 375h3M86 375h3M92 375h3M98 375h3M104 375h3M110 375h3M116 375h3M122 375h3M128 375h3M134 375h3M140 375h3M146 375h3M152 375h3M158 375h3M164 375h3M170 375h3M176 375h3M182 375h3M188 375h3M194 375h3M200 375h3M206 375h3M212 375h3M218 375h3M224 375h3M230 375h3M236 375h3M242 375h3M248 375h3M254 375h3M260 375h3M266 375h3M272 375h3M278 375h3M284 375h3M290 375h3M296 375h3M302 375h3M308 375h3M314 375h3M320 375h3M326 375h3M332 375h3M338 375h3M344 375h3M350 375h3M356 375h3M362 375h3M368 375h3M374 375h3M380 375h3M386 375h3M392 375h3M398 375h3M404 375h3M410 375h3M416 375h3M422 375h3M428 375h3M434 375h3M440 375h3M446 375h3M452 375h3M458 375h3M464 375h3M470 375h3M476 375h3M482 375h3M488 375h3M494 375h3M500 375h3M506 375h3M512 375h3M518 375h3M524 375h3M530 375h3M536 375h3M542 375h3M548 375h3M554 375h3M560 375h3M566 375h3M572 375h3M578 375h3M584 375h3M590 375h3M596 375h3M602 375h3M608 375h3M614 375h3M620 375h3M626 375h3M632 375h3M638 375h3M644 375h3M650 375h3M656 375h3M662 375h3M668 375h3M674 375h3M15 475h2M14 475h3M20 475h3M26 475h3M32 475h3M38 475h3M44 475h3M50 475h3M56 475h3M62 475h3M68 475h3M74 475h3M80 475h3M86 475h3M92 475h3M98 475h3M104 475h3M110 475h3M116 475h3M122 475h3M128 475h3M134 475h3M140 475h3M146 475h3M152 475h3M158 475h3M164 475h3M170 475h3M176 475h3M182 475h3M188 475h3M194 475h3M200 475h3M206 475h3M212 475h3M218 475h3M224 475h3M230 475h3M236 475h3M242 475h3M248 475h3M254 475h3M260 475h3M266 475h3M272 475h3M278 475h3M284 475h3M290 475h3M296 475h3M302 475h3M308 475h3M314 475h3M320 475h3M326 475h3M332 475h3M338 475h3M344 475h3M350 475h3M356 475h3M362 475h3M368 475h3M374 475h3M380 475h3M386 475h3M392 475h3M398 475h3M404 475h3M410 475h3M416 475h3M422 475h3M428 475h3M434 475h3M440 475h3M446 475h3M452 475h3M458 475h3M464 475h3M470 475h3M476 475h3M482 475h3M488 475h3M494 475h3M500 475h3M506 475h3M512 475h3M518 475h3M524 475h3M530 475h3M536 475h3M542 475h3M548 475h3M554 475h3M560 475h3M566 475h3M572 475h3M578 475h3M584 475h3M590 475h3M596 475h3M602 475h3M608 475h3M614 475h3M620 475h3M626 475h3M632 475h3M638 475h3M644 475h3M650 475h3M656 475h3M662 475h3M668 475h3M674 475h3" stroke="#778899" stroke-width="1" fill="none" transform="translate(0,0.5)"/>
<rect x="13" y="66" width="668" height="1" fill="#778899"/>
<rect x="12.5" y="35.5" width="669" height="343" fill="none" stroke="#ffffff"/>
<rect x="12.5" y="380.5" width="669" height="173" fill="none" stroke="#ffffff"/>
<path d="M682 101h2M682 134h2M682 169h2M682 204h2M682 239h2M682 272h2M682 307h2M682 342h2M682 375h2M682 66h1M682 382h1M682 475h1" stroke="#ffffff" fill="none" transform="translate(0,0.5)"/>
<path d="M13 554v3M77 554v3M141 554v3M205 554v3M269 554v3M333 554v3M397 554v3M461 554v3M525 554v3" stroke="#ffffff" fill="none" transform="translate(0.5,0)"/>
</g>
<g shape-rendering="crispEdges">
<rect x="13" y="215" width="1" height="18" fill="#00ff00"/>
<rect x="11" y="217" width="5" height="5" fill="#00ff00"/>
<rect x="12" y="218" width="3" height="3" fill="#ffffff"/>
<rect x="21" y="219" width="1" height="44" fill="#00ff00"/>
<rect x="19" y="220" width="5" height="26" fill="#00ff00"/>
<rect x="20" y="221" width="3" height="24" fill="#ffffff"/>
<rect x="29" y="232" width="1" height="21" fill="#00ff00"/>
<rect x="27" y="245" width="5" height="3" fill="#00ff00"/>
<rect x="28" y="246" width="3" height="1" fill="#ffffff"/>
<rect x="37" y="239" width="1" height="27" fill="#00ff00"/>
<rect x="35" y="247" width="5" height="3" fill="#00ff00"/>
<rect x="36" y="248" width="3" height="1" fill="#ffffff"/>
<rect x="45" y="240" width="1" height="26" fill="#00ff00"/>
<rect x="43" y="247" width="5" height="3" fill="#00ff00"/>
<rect x="44" y="248" width="3" height="1" fill="#000000"/>
<rect x="53" y="229" width="1" height="24" fill="#00ff00"/>
<rect x="51" y="239" width="5" height="9" fill="#00ff00"/>
<rect x="52" y="240" width="3" height="7" fill="#000000"/>
<rect x="61" y="210" width="1" height="31" fill="#00ff00"/>
<rect x="59" y="218" width="5" height="23" fill="#00ff00"/>
<rect x="60" y="219" width="3" height="21" fill="#000000"/>
<rect x="69" y="206" width="1" height="30" fill="#00ff00"/>
<rect x="67" y="218" width="5" height="13" fill="#00ff00"/>
<rect x="68" y="219" width="3" height="11" fill="#ffffff"/>
<rect x="77" y="225" width="1" height="37" fill="#00ff00"/>
<rect x="75" y="232" width="5" height="11" fill="#00ff00"/>
<rect x="76" y="233" width="3" height="9" fill="#ffffff"/>
<rect x="85" y="198" width="1" height="44" fill="#00ff00"/>
<rect x="83" y="205" width="5" height="34" fill="#00ff00"/>
<rect x="84" y="206" width="3" height="32" fill="#000000"/>
<rect x="93" y="164" width="1" height="42" fill="#00ff00"/>
<rect x="91" y="185" width="5" height="20" fill="#00ff00"/>
<rect x="92" y="186" width="3" height="18" fill="#000000"/>
<rect x="101" y="181" width="1" height="44" fill="#00ff00"/>
<rect x="99" y="184" width="5" height="32" fill="#00ff00"/>
<rect x="100" y="185" width="3" height="30" fill="#ffffff"/>
<rect x="109" y="194" width="1" height="29" fill="#00ff00"/>
<rect x="107" y="199" width="5" height="16" fill="#00ff00"/>
<rect x="108" y="200" width="3" height="14" fill="#000000"/>
<rect x="117" y="190" width="1" height="54" fill="#00ff00"/>
<rect x="115" y="199" width="5" height="37" fill="#00ff00"/>
<rect x="116" y="200" width="3" height="35" fill="#ffffff"/>
<rect x="125" y="231" width="1" height="24" fill="#00ff00"/>
<rect x="123" y="236" width="5" height="6" fill="#00ff00"/>
<rect x="124" y="237" width="3" height="4" fill="#ffffff"/>
<rect x="133" y="229" width="1" height="19" fill="#00ff00"/>
<rect x="131" y="237" width="5" height="5" fill="#00ff00"/>
<rect x="132" y="238" width="3" height="3" fill="#000000"/>
<rect x="141" y="217" width="1" height="21" fill="#00ff00"/>
<rect x="139" y="229" width="5" height="9" fill="#00ff00"/>
<rect x="140" y="230" width="3" height="7" fill="#000000"/>
<rect x="149" y="202" width="1" height="28" fill="#00ff00"/>
<rect x="147" y="208" width="5" height="22" fill="#00ff00"/>
<rect x="148" y="209" width="3" height="20" fill="#000000"/>
<rect x="157" y="204" width="1" height="17" fill="#00ff00"/>
<rect x="155" y="207" width="5" height="11" fill="#00ff00"/>
<rect x="156" y="208" width="3" height="9" fill="#ffffff"/>
<rect x="165" y="213" width="1" height="13" fill="#00ff00"/>
<rect x="163" y="215" width="5" height="3" fill="#00ff00"/>
<rect x="164" y="216" width="3" height="1" fill="#000000"/>
<rect x="173" y="196" width="1" height="20" fill="#00ff00"/>
<rect x="171" y="197" width="5" height="19" fill="#00ff00"/>
<rect x="172" y="198" width="3" height="17" fill="#000000"/>
<rect x="181" y="195" width="1" height="15" fill="#00ff00"/>
<rect x="179" y="198" width="5" height="2" fill="#00ff00"/>
<rect x="189" y="172" width="1" height="34" fill="#00ff00"/>
<rect x="187" y="182" width="5" height="18" fill="#00ff00"/>
<rect x="188" y="183" width="3" height="16" fill="#000000"/>
<rect x="197" y="178" width="1" height="21" fill="#00ff00"/>
<rect x="195" y="182" width="5" height="17" fill="#00ff00"/>
<rect x="196" y="183" width="3" height="15" fill="#ffffff"/>
<rect x="205" y="197" width="1" height="170" fill="#00ff00"/>
<rect x="203" y="197" width="5" height="42" fill="#00ff00"/>
<rect x="204" y="198" width="3" height="40" fill="#ffffff"/>
<rect x="213" y="229" width="1" height="21" fill="#00ff00"/>
<rect x="211" y="229" width="5" height="10" fill="#00ff00"/>
<rect x="212" y="230" width="3" height="8" fill="#000000"/>
<rect x="221" y="167" width="1" height="63" fill="#00ff00"/>
<rect x="219" y="181" width="5" height="49" fill="#00ff00"/>
<rect x="220" y="182" width="3" height="47" fill="#000000"/>
<rect x="229" y="182" width="1" height="2" fill="#00ff00"/>
<rect x="227" y="182" width="5" height="1" fill="#00ff00"/>
<rect x="237" y="197" width="1" height="47" fill="#00ff00"/>
<rect x="235" y="208" width="5" height="36" fill="#00ff00"/>
<rect x="236" y="209" width="3" height="34" fill="#000000"/>
<rect x="245" y="199" width="1" height="15" fill="#00ff00"/>
<rect x="243" y="202" width="5" height="3" fill="#00ff00"/>
<rect x="244" y="203" width="3" height="1" fill="#000000"/>
<rect x="253" y="194" width="1" height="63" fill="#00ff00"/>
<rect x="251" y="203" width="5" height="41" fill="#00ff00"/>
<rect x="252" y="204" width="3" height="39" fill="#ffffff"/>
<rect x="261" y="221" width="1" height="39" fill="#00ff00"/>
<rect x="259" y="243" width="5" height="9" fill="#00ff00"/>
<rect x="260" y="244" width="3" height="7" fill="#ffffff"/>
<rect x="269" y="189" width="1" height="70" fill="#00ff00"/>
<rect x="267" y="191" width="5" height="65" fill="#00ff00"/>
<rect x="268" y="192" width="3" height="63" fill="#000000"/>
<rect x="277" y="164" width="1" height="34" fill="#00ff00"/>
<rect x="275" y="166" width="5" height="25" fill="#00ff00"/>
<rect x="276" y="167" width="3" height="23" fill="#000000"/>
<rect x="285" y="161" width="1" height="30" fill="#00ff00"/>
<rect x="283" y="166" width="5" height="20" fill="#00ff00"/>
<rect x="284" y="167" width="3" height="18" fill="#ffffff"/>
<rect x="293" y="172" width="1" height="19" fill="#00ff00"/>
<rect x="291" y="173" width="5" height="12" fill="#00ff00"/>
<rect x="292" y="174" width="3" height="10" fill="#000000"/>
<rect x="301" y="152" width="1" height="59" fill="#00ff00"/>
<rect x="299" y="173" width="5" height="38" fill="#00ff00"/>
<rect x="300" y="174" width="3" height="36" fill="#ffffff"/>
<rect x="309" y="167" width="1" height="61" fill="#00ff00"/>
<rect x="307" y="173" width="5" height="36" fill="#00ff00"/>
<rect x="308" y="174" width="3" height="34" fill="#000000"/>
<rect x="317" y="166" width="1" height="27" fill="#00ff00"/>
<rect x="315" y="173" width="5" height="18" fill="#00ff00"/>
<rect x="316" y="174" width="3" height="16" fill="#ffffff"/>
<rect x="325" y="185" width="1" height="33" fill="#00ff00"/>
<rect x="323" y="190" width="5" height="14" fill="#00ff00"/>
<rect x="324" y="191" width="3" height="12" fill="#ffffff"/>
<rect x="333" y="161" width="1" height="62" fill="#00ff00"/>
<rect x="331" y="163" width="5" height="40" fill="#00ff00"/>
<rect x="332" y="164" width="3" height="38" fill="#000000"/>
<rect x="341" y="149" width="1" height="42" fill="#00ff00"/>
<rect x="339" y="150" width="5" height="14" fill="#00ff00"/>
<rect x="340" y="151" width="3" height="12" fill="#000000"/>
<rect x="349" y="141" width="1" height="25" fill="#00ff00"/>
<rect x="347" y="150" width="5" height="14" fill="#00ff00"/>
<rect x="348" y="151" width="3" height="12" fill="#ffffff"/>
<rect x="357" y="149" width="1" height="24" fill="#00ff00"/>
<rect x="355" y="156" width="5" height="8" fill="#00ff00"/>
<rect x="356" y="157" width="3" height="6" fill="#000000"/>
<rect x="365" y="117" width="1" height="40" fill="#00ff00"/>
<rect x="363" y="124" width="5" height="33" fill="#00ff00"/>
<rect x="364" y="125" width="3" height="31" fill="#000000"/>
<rect x="373" y="117" width="1" height="15" fill="#00ff00"/>
<rect x="371" y="119" width="5" height="6" fill="#00ff00"/>
<rect x="372" y="120" width="3" height="4" fill="#000000"/>
<rect x="381" y="100" width="1" height="26" fill="#00ff00"/>
<rect x="379" y="105" width="5" height="15" fill="#00ff00"/>
<rect x="380" y="106" width="3" height="13" fill="#000000"/>
<rect x="389" y="101" width="1" height="17" fill="#00ff00"/>
<rect x="387" y="105" width="5" height="10" fill="#00ff00"/>
<rect x="388" y="106" width="3" height="8" fill="#ffffff"/>
<rect x="397" y="103" width="1" height="16" fill="#00ff00"/>
<rect x="395" y="107" width="5" height="8" fill="#00ff00"/>
<rect x="396" y="108" width="3" height="6" fill="#000000"/>
<rect x="405" y="103" width="1" height="11" fill="#00ff00"/>
<rect x="403" y="105" width="5" height="3" fill="#00ff00"/>
<rect x="404" y="106" width="3" height="1" fill="#000000"/>
<rect x="413" y="99" width="1" height="25" fill="#00ff00"/>
<rect x="411" y="104" width="5" height="16" fill="#00ff00"/>
<rect x="412" y="105" width="3" height="14" fill="#ffffff"/>
<rect x="421" y="114" width="1" height="21" fill="#00ff00"/>
<rect x="419" y="119" width="5" height="11" fill="#00ff00"/>
<rect x="420" y="120" width="3" height="9" fill="#ffffff"/>
<rect x="429" y="126" width="1" height="32" fill="#00ff00"/>
<rect x="427" y="129" width="5" height="28" fill="#00ff00"/>
<rect x="428" y="130" width="3" height="26" fill="#ffffff"/>
<rect x="437" y="137" width="1" height="20" fill="#00ff00"/>
<rect x="435" y="138" width="5" height="18" fill="#00ff00"/>
<rect x="436" y="139" width="3" height="16" fill="#000000"/>
<rect x="445" y="127" width="1" height="20" fill="#00ff00"/>
<rect x="443" y="138" width="5" height="6" fill="#00ff00"/>
<rect x="444" y="139" width="3" height="4" fill="#ffffff"/>
<rect x="453" y="136" width="1" height="11" fill="#00ff00"/>
<rect x="451" y="142" width="5" height="2" fill="#00ff00"/>
<rect x="461" y="124" width="1" height="28" fill="#00ff00"/>
<rect x="459" y="124" width="5" height="20" fill="#00ff00"/>
<rect x="460" y="125" width="3" height="18" fill="#000000"/>
<rect x="469" y="112" width="1" height="15" fill="#00ff00"/>
<rect x="467" y="114" width="5" height="12" fill="#00ff00"/>
<rect x="468" y="115" width="3" height="10" fill="#000000"/>
<rect x="477" y="112" width="1" height="13" fill="#00ff00"/>
<rect x="475" y="115" width="5" height="7" fill="#00ff00"/>
<rect x="476" y="116" width="3" height="5" fill="#ffffff"/>
<rect x="485" y="95" width="1" height="33" fill="#00ff00"/>
<rect x="483" y="100" width="5" height="22" fill="#00ff00"/>
<rect x="484" y="101" width="3" height="20" fill="#000000"/>
<rect x="493" y="98" width="1" height="16" fill="#00ff00"/>
<rect x="491" y="101" width="5" height="6" fill="#00ff00"/>
<rect x="492" y="102" width="3" height="4" fill="#ffffff"/>
<rect x="501" y="72" width="1" height="37" fill="#00ff00"/>
<rect x="499" y="74" width="5" height="32" fill="#00ff00"/>
<rect x="500" y="75" width="3" height="30" fill="#000000"/>
<rect x="509" y="68" width="1" height="18" fill="#00ff00"/>
<rect x="507" y="74" width="5" height="7" fill="#00ff00"/>
<rect x="508" y="75" width="3" height="5" fill="#ffffff"/>
<rect x="517" y="63" width="1" height="29" fill="#00ff00"/>
<rect x="515" y="64" width="5" height="17" fill="#00ff00"/>
<rect x="516" y="65" width="3" height="15" fill="#000000"/>
<rect x="525" y="56" width="1" height="25" fill="#00ff00"/>
<rect x="523" y="64" width="5" height="2" fill="#00ff00"/>
<rect x="533" y="54" width="1" height="18" fill="#00ff00"/>
<rect x="531" y="58" width="5" height="7" fill="#00ff00"/>
<rect x="532" y="59" width="3" height="5" fill="#000000"/>
<rect x="541" y="55" width="1" height="21" fill="#00ff00"/>
<rect x="539" y="57" width="5" height="10" fill="#00ff00"/>
<rect x="540" y="58" width="3" height="8" fill="#ffffff"/>
</g>
<rect x="10" y="36" width="2" height="342" fill="#000"/>
<svg x="13" y="381" width="668" height="172" viewBox="13 381 668 172" overflow="hidden">
<polyline points="13,523.8 21,523.8 29,523.8 37,529.9 45,529.9 53,529.9 61,514.0 69,488.5 77,462.0 85,416.5 93,408.8 101,410.0 109,413.0 117,442.7 125,476.5 133,489.8 141,489.8 149,516.0 157,502.8 165,471.0 173,441.0 181,407.5 189,402.7 197,407.3 205,450.0 213,488.5 221,467.0 229,453.5 237,475.7 245,482.1 253,501.2 261,510.0 269,486.9 277,470.4 285,475.4 293,441.8 301,445.0 309,435.0 317,438.1 325,468.6 333,468.6 341,451.4 349,430.4 357,418.4 365,406.2 373,405.7 381,402.2 389,402.2 397,405.0 405,405.0 413,414.0 421,452.0 429,499.6 437,525.1 445,540.2 453,540.2 461,524.3 469,489.3 477,455.0 485,417.3 493,405.5 501,405.5 509,402.0 517,402.0 525,402.0 533,402.0 541,409.3" fill="none" stroke="#ff0000" stroke-width="2" stroke-linejoin="round" shape-rendering="crispEdges"/>
<polyline points="13,421.9 21,429.8 29,439.6 37,450.4 45,459.0 53,473.4 61,478.9 69,490.0 77,506.8 85,502.0 93,493.3 101,492.5 109,488.5 117,493.3 125,495.6 133,501.2 141,502.8 149,494.0 157,484.5 165,475.0 173,460.0 181,448.9 189,439.5 197,438.6 205,433.8 213,433.5 221,426.5 229,426.1 237,431.2 245,435.0 253,448.9 261,466.8 269,461.2 277,458.1 285,457.8 293,449.6 301,445.8 309,441.9 317,436.9 325,439.6 333,439.6 341,437.3 349,434.2 357,431.2 365,429.4 373,427.0 381,421.1 389,418.4 397,412.7 405,410.4 413,410.7 421,411.6 429,410.2 437,410.2 445,411.1 453,414.0 461,417.8 469,419.6 477,420.8 485,420.8 493,420.8 501,420.8 509,420.8 517,420.8 525,419.9 533,420.8 541,420.8" fill="none" stroke="#00ffff" stroke-width="2" stroke-linejoin="round" shape-rendering="crispEdges"/>
<polyline points="13,434.0 21,434.0 29,434.0 37,434.0 45,434.0 53,434.0 61,432.8 69,432.2 77,432.2 85,431.2 93,429.3 101,427.8 109,426.0 117,425.6 125,426.0 133,427.3 141,428.5 149,428.5 157,428.5 165,429.2 173,430.4 181,430.7 189,431.4 197,432.0 205,435.8 213,440.4 221,440.9 229,441.5 237,442.4 245,444.0 253,450.4 261,459.0 269,460.3 277,460.3 285,460.3 293,457.4 301,456.6 309,454.3 317,452.4 325,451.7 333,448.9 341,447.3 349,444.3 357,438.9 365,434.5 373,429.6 381,422.7 389,419.9 397,418.1 405,417.3 413,413.7 421,412.2 429,411.1 437,411.1 445,412.0 453,412.0 461,411.9 469,411.9 477,411.6 485,410.7 493,410.7 501,411.0 509,408.5 517,407.0 525,405.8 533,405.0 541,405.0" fill="none" stroke="#ffff00" stroke-width="2" stroke-linejoin="round" shape-rendering="crispEdges"/>
</svg>
<path d="M15 397h2M14 397h3M20 397h3M26 397h3M32 397h3M38 397h3M44 397h3M50 397h3M56 397h3M62 397h3M68 397h3M74 397h3M80 397h3M86 397h3M92 397h3M98 397h3M104 397h3M110 397h3M116 397h3M122 397h3M128 397h3M134 397h3M140 397h3M146 397h3M152 397h3M158 397h3M164 397h3M170 397h3M176 397h3M182 397h3M188 397h3M194 397h3M200 397h3M206 397h3M212 397h3M218 397h3M224 397h3M230 397h3M236 397h3M242 397h3M248 397h3M254 397h3M260 397h3M266 397h3M272 397h3M278 397h3M284 397h3M290 397h3M296 397h3M302 397h3M308 397h3M314 397h3M320 397h3M326 397h3M332 397h3M338 397h3M344 397h3M350 397h3M356 397h3M362 397h3M368 397h3M374 397h3M380 397h3M386 397h3M392 397h3M398 397h3M404 397h3M410 397h3M416 397h3M422 397h3M428 397h3M434 397h3M440 397h3M446 397h3M452 397h3M458 397h3M464 397h3M470 397h3M476 397h3M482 397h3M488 397h3M494 397h3M500 397h3M506 397h3M512 397h3M518 397h3M524 397h3M530 397h3M536 397h3M542 397h3M548 397h3M554 397h3M560 397h3M566 397h3M572 397h3M578 397h3M584 397h3M590 397h3M596 397h3M602 397h3M608 397h3M614 397h3M620 397h3M626 397h3M632 397h3M638 397h3M644 397h3M650 397h3M656 397h3M662 397h3M668 397h3M674 397h3M680 397h1M15 413h2M14 413h3M20 413h3M26 413h3M32 413h3M38 413h3M44 413h3M50 413h3M56 413h3M62 413h3M68 413h3M74 413h3M80 413h3M86 413h3M92 413h3M98 413h3M104 413h3M110 413h3M116 413h3M122 413h3M128 413h3M134 413h3M140 413h3M146 413h3M152 413h3M158 413h3M164 413h3M170 413h3M176 413h3M182 413h3M188 413h3M194 413h3M200 413h3M206 413h3M212 413h3M218 413h3M224 413h3M230 413h3M236 413h3M242 413h3M248 413h3M254 413h3M260 413h3M266 413h3M272 413h3M278 413h3M284 413h3M290 413h3M296 413h3M302 413h3M308 413h3M314 413h3M320 413h3M326 413h3M332 413h3M338 413h3M344 413h3M350 413h3M356 413h3M362 413h3M368 413h3M374 413h3M380 413h3M386 413h3M392 413h3M398 413h3M404 413h3M410 413h3M416 413h3M422 413h3M428 413h3M434 413h3M440 413h3M446 413h3M452 413h3M458 413h3M464 413h3M470 413h3M476 413h3M482 413h3M488 413h3M494 413h3M500 413h3M506 413h3M512 413h3M518 413h3M524 413h3M530 413h3M536 413h3M542 413h3M548 413h3M554 413h3M560 413h3M566 413h3M572 413h3M578 413h3M584 413h3M590 413h3M596 413h3M602 413h3M608 413h3M614 413h3M620 413h3M626 413h3M632 413h3M638 413h3M644 413h3M650 413h3M656 413h3M662 413h3M668 413h3M674 413h3M680 413h1M15 436h2M14 436h3M20 436h3M26 436h3M32 436h3M38 436h3M44 436h3M50 436h3M56 436h3M62 436h3M68 436h3M74 436h3M80 436h3M86 436h3M92 436h3M98 436h3M104 436h3M110 436h3M116 436h3M122 436h3M128 436h3M134 436h3M140 436h3M146 436h3M152 436h3M158 436h3M164 436h3M170 436h3M176 436h3M182 436h3M188 436h3M194 436h3M200 436h3M206 436h3M212 436h3M218 436h3M224 436h3M230 436h3M236 436h3M242 436h3M248 436h3M254 436h3M260 436h3M266 436h3M272 436h3M278 436h3M284 436h3M290 436h3M296 436h3M302 436h3M308 436h3M314 436h3M320 436h3M326 436h3M332 436h3M338 436h3M344 436h3M350 436h3M356 436h3M362 436h3M368 436h3M374 436h3M380 436h3M386 436h3M392 436h3M398 436h3M404 436h3M410 436h3M416 436h3M422 436h3M428 436h3M434 436h3M440 436h3M446 436h3M452 436h3M458 436h3M464 436h3M470 436h3M476 436h3M482 436h3M488 436h3M494 436h3M500 436h3M506 436h3M512 436h3M518 436h3M524 436h3M530 436h3M536 436h3M542 436h3M548 436h3M554 436h3M560 436h3M566 436h3M572 436h3M578 436h3M584 436h3M590 436h3M596 436h3M602 436h3M608 436h3M614 436h3M620 436h3M626 436h3M632 436h3M638 436h3M644 436h3M650 436h3M656 436h3M662 436h3M668 436h3M674 436h3M680 436h1M15 514h2M14 514h3M20 514h3M26 514h3M32 514h3M38 514h3M44 514h3M50 514h3M56 514h3M62 514h3M68 514h3M74 514h3M80 514h3M86 514h3M92 514h3M98 514h3M104 514h3M110 514h3M116 514h3M122 514h3M128 514h3M134 514h3M140 514h3M146 514h3M152 514h3M158 514h3M164 514h3M170 514h3M176 514h3M182 514h3M188 514h3M194 514h3M200 514h3M206 514h3M212 514h3M218 514h3M224 514h3M230 514h3M236 514h3M242 514h3M248 514h3M254 514h3M260 514h3M266 514h3M272 514h3M278 514h3M284 514h3M290 514h3M296 514h3M302 514h3M308 514h3M314 514h3M320 514h3M326 514h3M332 514h3M338 514h3M344 514h3M350 514h3M356 514h3M362 514h3M368 514h3M374 514h3M380 514h3M386 514h3M392 514h3M398 514h3M404 514h3M410 514h3M416 514h3M422 514h3M428 514h3M434 514h3M440 514h3M446 514h3M452 514h3M458 514h3M464 514h3M470 514h3M476 514h3M482 514h3M488 514h3M494 514h3M500 514h3M506 514h3M512 514h3M518 514h3M524 514h3M530 514h3M536 514h3M542 514h3M548 514h3M554 514h3M560 514h3M566 514h3M572 514h3M578 514h3M584 514h3M590 514h3M596 514h3M602 514h3M608 514h3M614 514h3M620 514h3M626 514h3M632 514h3M638 514h3M644 514h3M650 514h3M656 514h3M662 514h3M668 514h3M674 514h3M680 514h1M15 537h2M14 537h3M20 537h3M26 537h3M32 537h3M38 537h3M44 537h3M50 537h3M56 537h3M62 537h3M68 537h3M74 537h3M80 537h3M86 537h3M92 537h3M98 537h3M104 537h3M110 537h3M116 537h3M122 537h3M128 537h3M134 537h3M140 537h3M146 537h3M152 537h3M158 537h3M164 537h3M170 537h3M176 537h3M182 537h3M188 537h3M194 537h3M200 537h3M206 537h3M212 537h3M218 537h3M224 537h3M230 537h3M236 537h3M242 537h3M248 537h3M254 537h3M260 537h3M266 537h3M272 537h3M278 537h3M284 537h3M290 537h3M296 537h3M302 537h3M308 537h3M314 537h3M320 537h3M326 537h3M332 537h3M338 537h3M344 537h3M350 537h3M356 537h3M362 537h3M368 537h3M374 537h3M380 537h3M386 537h3M392 537h3M398 537h3M404 537h3M410 537h3M416 537h3M422 537h3M428 537h3M434 537h3M440 537h3M446 537h3M452 537h3M458 537h3M464 537h3M470 537h3M476 537h3M482 537h3M488 537h3M494 537h3M500 537h3M506 537h3M512 537h3M518 537h3M524 537h3M530 537h3M536 537h3M542 537h3M548 537h3M554 537h3M560 537h3M566 537h3M572 537h3M578 537h3M584 537h3M590 537h3M596 537h3M602 537h3M608 537h3M614 537h3M620 537h3M626 537h3M632 537h3M638 537h3M644 537h3M650 537h3M656 537h3M662 537h3M668 537h3M674 537h3M680 537h1" stroke="#c0c0c0" stroke-width="1" fill="none" shape-rendering="crispEdges" transform="translate(0,0.5)"/>
<g shape-rendering="crispEdges" fill="#778899"><rect x="548" y="36" width="10" height="1"/><rect x="549" y="37" width="8" height="1"/><rect x="550" y="38" width="6" height="1"/><rect x="551" y="39" width="4" height="1"/><rect x="552" y="40" width="2" height="1"/></g>
<path d="M428.8 160.5l2.1 5.6 5.4 0.3-4.3 3.5 1.6 5.3-4.8-3.1-4.8 3.1 1.6-5.3-4.3-3.5 5.4-0.3z" fill="#ff69b4"/>
<path d="M437 172.5l10 9.7v7l-7-6.8v14.6h-6v-14.6l-7 6.8v-7z" fill="#ff69b4"/>
<path d="M16 42h7l-3.5 4z" fill="#ffffff"/>
<text x="28.1" y="47" font-size="10.0" fill="#ffffff" stroke="#ffffff" stroke-width="0.12" textLength="59.4" lengthAdjust="spacingAndGlyphs">NZDUSD,M15</text>
<text x="93.9" y="47" font-size="10.0" fill="#ffffff" stroke="#ffffff" stroke-width="0.12" textLength="32.9" lengthAdjust="spacingAndGlyphs">0.71362</text>
<text x="130.4" y="47" font-size="10.0" fill="#ffffff" stroke="#ffffff" stroke-width="0.12" textLength="32.3" lengthAdjust="spacingAndGlyphs">0.71365</text>
<text x="166.1" y="47" font-size="10.0" fill="#ffffff" stroke="#ffffff" stroke-width="0.12" textLength="32.9" lengthAdjust="spacingAndGlyphs">0.71329</text>
<text x="201.8" y="47" font-size="10.0" fill="#ffffff" stroke="#ffffff" stroke-width="0.12" textLength="32.9" lengthAdjust="spacingAndGlyphs">0.71345</text>
<text x="17.0" y="393" font-size="10.0" fill="#ffffff" stroke="#ffffff" stroke-width="0.12" textLength="43.6" lengthAdjust="spacingAndGlyphs">R(9,26,52)</text>
<text x="63.0" y="393" font-size="10.0" fill="#ffffff" stroke="#ffffff" stroke-width="0.12" textLength="18.2" lengthAdjust="spacingAndGlyphs">85.0</text>
<text x="83.3" y="393" font-size="10.0" fill="#ffffff" stroke="#ffffff" stroke-width="0.12" textLength="19.0" lengthAdjust="spacingAndGlyphs">69.4</text>
<text x="104.4" y="393" font-size="10.0" fill="#ffffff" stroke="#ffffff" stroke-width="0.12" textLength="19.0" lengthAdjust="spacingAndGlyphs">89.5</text>
<text x="687.1" y="105" font-size="10.0" fill="#ffffff" stroke="#ffffff" stroke-width="0.12" textLength="32.9" lengthAdjust="spacingAndGlyphs">0.71280</text>
<text x="687.1" y="138" font-size="10.0" fill="#ffffff" stroke="#ffffff" stroke-width="0.12" textLength="32.9" lengthAdjust="spacingAndGlyphs">0.71220</text>
<text x="687.1" y="173" font-size="10.0" fill="#ffffff" stroke="#ffffff" stroke-width="0.12" textLength="32.9" lengthAdjust="spacingAndGlyphs">0.71155</text>
<text x="687.1" y="208" font-size="10.0" fill="#ffffff" stroke="#ffffff" stroke-width="0.12" textLength="32.9" lengthAdjust="spacingAndGlyphs">0.71090</text>
<text x="687.1" y="243" font-size="10.0" fill="#ffffff" stroke="#ffffff" stroke-width="0.12" textLength="32.9" lengthAdjust="spacingAndGlyphs">0.71025</text>
<text x="687.1" y="276" font-size="10.0" fill="#ffffff" stroke="#ffffff" stroke-width="0.12" textLength="32.9" lengthAdjust="spacingAndGlyphs">0.70965</text>
<text x="687.1" y="311" font-size="10.0" fill="#ffffff" stroke="#ffffff" stroke-width="0.12" textLength="32.9" lengthAdjust="spacingAndGlyphs">0.70900</text>
<text x="687.1" y="346" font-size="10.0" fill="#ffffff" stroke="#ffffff" stroke-width="0.12" textLength="32.9" lengthAdjust="spacingAndGlyphs">0.70835</text>
<text x="687.1" y="379" font-size="10.0" fill="#ffffff" stroke="#ffffff" stroke-width="0.12" textLength="32.9" lengthAdjust="spacingAndGlyphs">0.70775</text>
<rect x="683" y="61" width="41" height="11" fill="#ffffff"/>
<text x="686.9" y="70" font-size="10.0" fill="#000000" stroke="#000000" stroke-width="0" textLength="32.9" lengthAdjust="spacingAndGlyphs">0.71345</text>
<text x="685.3" y="391" font-size="10.0" fill="#ffffff" stroke="#ffffff" stroke-width="0.12" textLength="14.6" lengthAdjust="spacingAndGlyphs">120</text>
<text x="684.6" y="401" font-size="10.0" fill="#ffffff" stroke="#ffffff" stroke-width="0.12" textLength="14.4" lengthAdjust="spacingAndGlyphs">100</text>
<text x="683.8" y="417" font-size="10.0" fill="#ffffff" stroke="#ffffff" stroke-width="0.12" textLength="10.3" lengthAdjust="spacingAndGlyphs">80</text>
<text x="683.8" y="440" font-size="10.0" fill="#ffffff" stroke="#ffffff" stroke-width="0.12" textLength="10.4" lengthAdjust="spacingAndGlyphs">50</text>
<text x="685.2" y="479" font-size="10.0" fill="#ffffff" stroke="#ffffff" stroke-width="0.12" textLength="17.7" lengthAdjust="spacingAndGlyphs">0.00</text>
<text x="684.2" y="518" font-size="10.0" fill="#ffffff" stroke="#ffffff" stroke-width="0.12" textLength="12.8" lengthAdjust="spacingAndGlyphs">-50</text>
<text x="684.2" y="541" font-size="10.0" fill="#ffffff" stroke="#ffffff" stroke-width="0.12" textLength="12.8" lengthAdjust="spacingAndGlyphs">-80</text>
<text x="684.4" y="550" font-size="10.0" fill="#ffffff" stroke="#ffffff" stroke-width="0.12" textLength="18.5" lengthAdjust="spacingAndGlyphs">-100</text>
<text x="12.3" y="566" font-size="10.0" fill="#ffffff" stroke="#ffffff" stroke-width="0.12" textLength="51.4" lengthAdjust="spacingAndGlyphs">24 Dec 2020</text>
<text x="76.5" y="566" font-size="10.0" fill="#ffffff" stroke="#ffffff" stroke-width="0.12" textLength="54.1" lengthAdjust="spacingAndGlyphs">24 Dec 16:15</text>
<text x="140.5" y="566" font-size="10.0" fill="#ffffff" stroke="#ffffff" stroke-width="0.12" textLength="54.1" lengthAdjust="spacingAndGlyphs">24 Dec 18:15</text>
<text x="204.5" y="566" font-size="10.0" fill="#ffffff" stroke="#ffffff" stroke-width="0.12" textLength="54.1" lengthAdjust="spacingAndGlyphs">24 Dec 20:15</text>
<text x="268.5" y="566" font-size="10.0" fill="#ffffff" stroke="#ffffff" stroke-width="0.12" textLength="54.1" lengthAdjust="spacingAndGlyphs">28 Dec 01:00</text>
<text x="332.5" y="566" font-size="10.0" fill="#ffffff" stroke="#ffffff" stroke-width="0.12" textLength="54.1" lengthAdjust="spacingAndGlyphs">28 Dec 03:00</text>
<text x="396.5" y="566" font-size="10.0" fill="#ffffff" stroke="#ffffff" stroke-width="0.12" textLength="54.1" lengthAdjust="spacingAndGlyphs">28 Dec 05:00</text>
<text x="460.5" y="566" font-size="10.0" fill="#ffffff" stroke="#ffffff" stroke-width="0.12" textLength="54.1" lengthAdjust="spacingAndGlyphs">28 Dec 07:00</text>
<text x="524.5" y="566" font-size="10.0" fill="#ffffff" stroke="#ffffff" stroke-width="0.12" textLength="54.1" lengthAdjust="spacingAndGlyphs">28 Dec 09:00</text>
</svg></body></html>
